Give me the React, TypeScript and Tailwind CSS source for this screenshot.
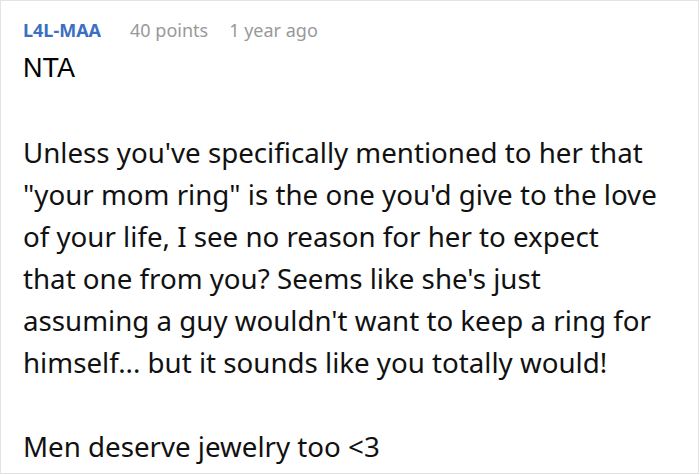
export default function App() {
  return (
    <div className="w-[700px] h-[475px] bg-white">
      <div className="w-[699px] h-[474px] border border-[#e3e3e3] pl-[22px] pr-[12px] pt-[16px]">
        <div className="flex items-center text-[18px] font-['Noto_Sans',sans-serif] leading-[26px]">
          <span className="font-bold text-[#3a6fc2]">L4L-MAA</span>
          <span className="ml-[29px] text-[#999999]">40 points</span>
          <span className="ml-[21px] text-[#999999]">1 year ago</span>
        </div>
        <div className="mt-[4px] font-['Liberation_Sans',sans-serif] text-[27px] leading-[42px] text-black">
          NTA
        </div>
        <p className="font-['Noto_Sans',sans-serif] text-[27.7px] leading-[42px] text-[#111] mt-[42px] whitespace-nowrap">
          Unless you've specifically mentioned to her that
          <br />
          "your mom ring" is the one you'd give to the love
          <br />
          of your life, I see no reason for her to expect
          <br />
          that one from you? Seems like she's just
          <br />
          assuming a guy wouldn't want to keep a ring for
          <br />
          himself... but it sounds like you totally would!
        </p>
        <p className="font-['Noto_Sans',sans-serif] text-[27.7px] leading-[42px] text-[#111] mt-[42px]">
          Men deserve jewelry too &lt;3
        </p>
      </div>
    </div>
  )
}
